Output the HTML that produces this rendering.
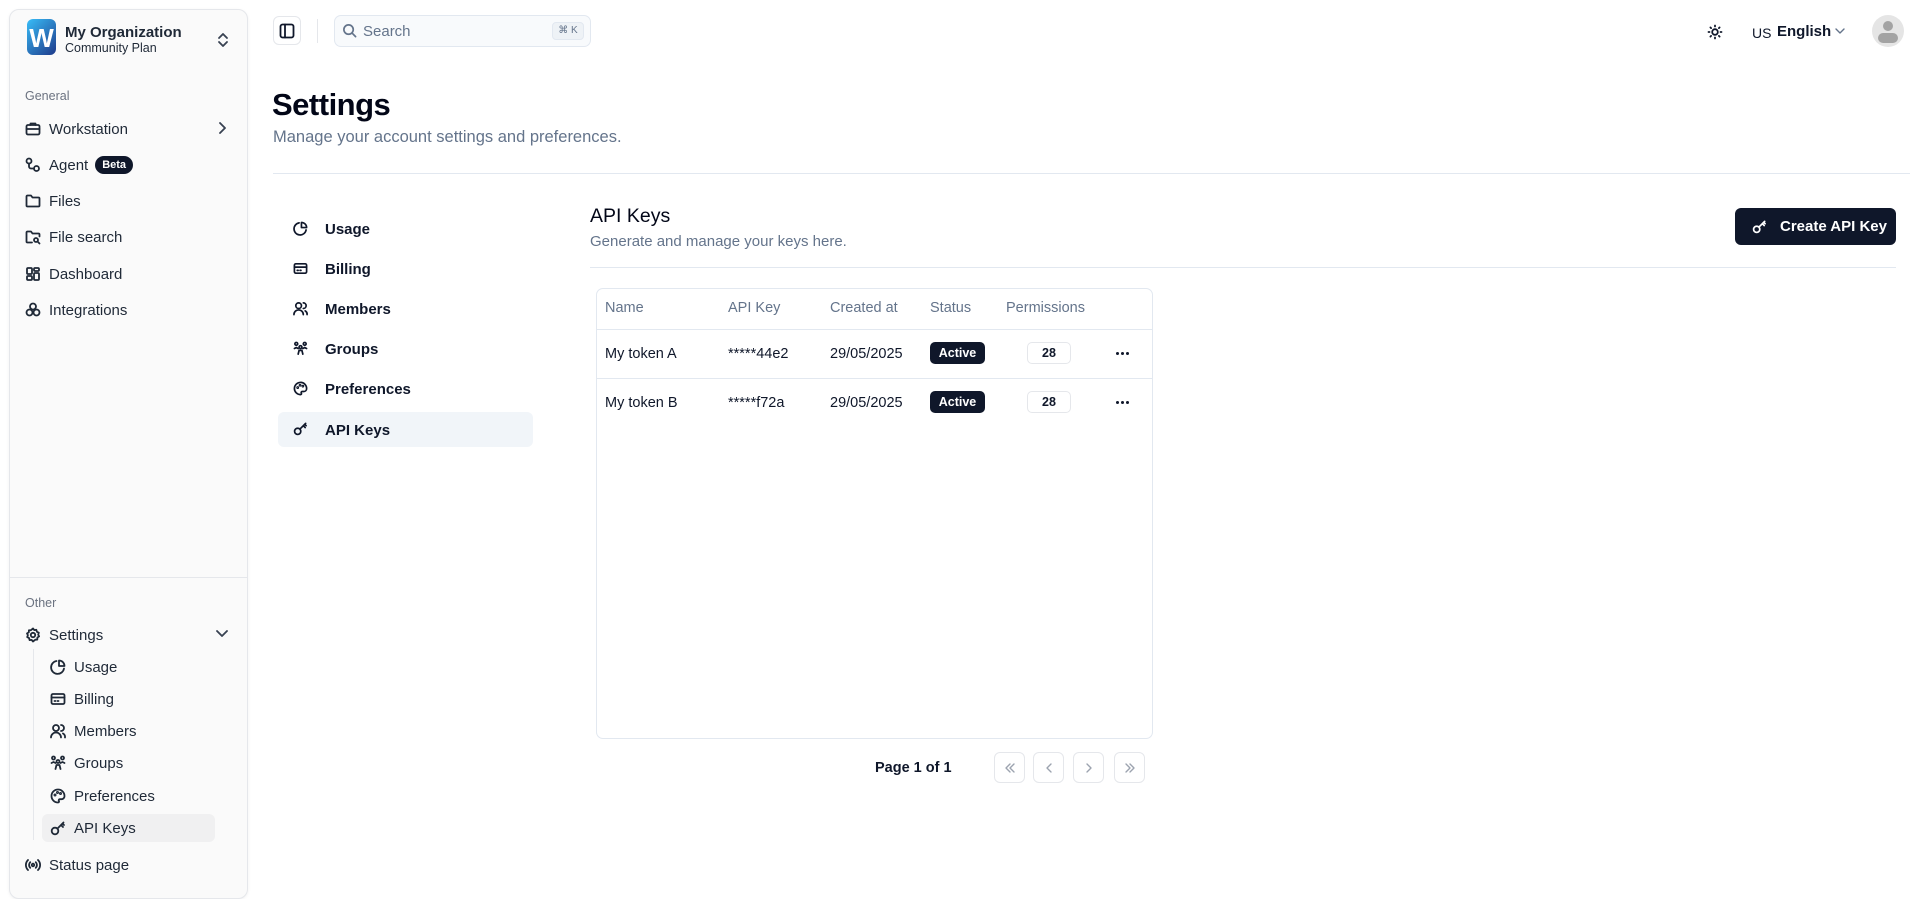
<!DOCTYPE html>
<html><head><meta charset="utf-8"><style>
*{box-sizing:border-box;margin:0;padding:0}
body{width:1919px;height:883px;overflow:hidden;background:#fff;font-family:"Liberation Sans",sans-serif;color:#0f172a;position:relative}
.a{position:absolute}
.sb{left:9px;top:9px;width:239px;height:890px;background:#fafafa;border:1px solid #e5e7eb;border-radius:10px;box-shadow:0 1px 3px rgba(0,0,0,.06)}
.it{position:absolute;font-size:15px;color:#1f2937;display:flex;align-items:center;height:20px}
.it svg{position:absolute}
.lbl{font-size:12.5px;color:#6b7280}
svg{fill:none;stroke:currentColor;stroke-width:1.8;stroke-linecap:round;stroke-linejoin:round}
.nv{position:absolute;left:293px;font-size:15px;font-weight:bold;color:#0f172a;height:20px;display:flex;align-items:center}
.th{position:absolute;top:300px;font-size:14.5px;color:#64748b}
.td{position:absolute;font-size:14.5px;color:#0f172a}
.badge{position:absolute;width:55px;height:22px;background:#0f172a;color:#fff;font-size:12.5px;font-weight:bold;border-radius:5px;text-align:center;line-height:22px}
.pb{position:absolute;width:44px;height:22px;border:1px solid #e5e7eb;border-radius:5px;font-size:12.5px;font-weight:bold;text-align:center;line-height:20px}
.pg{position:absolute;top:752px;width:31px;height:31px;border:1px solid #e5e7eb;border-radius:6px;color:#9ca3af;display:flex;align-items:center;justify-content:center}
.dots{position:absolute;width:16px;height:4px}
.dots i{position:absolute;top:0;width:3px;height:3px;border-radius:50%;background:#0f172a}
</style></head><body>

<div class="a sb"></div>
<div class="a" style="left:27px;top:19px;width:29px;height:36px;border-radius:6px;background:linear-gradient(135deg,#38bdf8,#1e3a8a);color:#fff;font-weight:bold;font-size:26px;text-align:center;line-height:38px">W</div>
<div class="a" style="left:65px;top:24px;font-size:15px;font-weight:bold;color:#1f2937">My Organization</div>
<div class="a" style="left:65px;top:41px;font-size:12.5px;color:#1f2937">Community Plan</div>
<svg class="a" style="left:216px;top:31px;color:#374151" width="14" height="18" viewBox="0 0 14 18"><path d="M3 7l4-4 4 4M3 11l4 4 4-4"/></svg>

<div class="a lbl" style="left:25px;top:89px">General</div>
<div class="it" style="left:25px;top:119px"><svg width="16" height="16" viewBox="0 0 16 16" style="left:0"><rect x="1.5" y="4" width="13" height="9.5" rx="1.5"/><path d="M5.5 4V2.5h5V4M1.5 8h13"/></svg><span style="margin-left:24px">Workstation</span></div>
<svg class="a" style="left:216px;top:121px;color:#374151" width="12" height="14" viewBox="0 0 12 14"><path d="M4 2l5 5-5 5"/></svg>
<div class="it" style="left:25px;top:155px"><svg width="16" height="16" viewBox="0 0 16 16" style="left:0"><circle cx="4" cy="4" r="2.5"/><circle cx="11.5" cy="11.5" r="2.5"/><path d="M4 6.5v3a2 2 0 0 0 2 2h3"/></svg><span style="margin-left:24px">Agent</span><span style="margin-left:7px;background:#0f172a;color:#fff;font-size:11px;font-weight:bold;border-radius:10px;padding:3px 7px">Beta</span></div>
<div class="it" style="left:25px;top:191px"><svg width="16" height="16" viewBox="0 0 16 16" style="left:0"><path d="M1.5 3.5a1 1 0 0 1 1-1h3.5l1.5 2h6a1 1 0 0 1 1 1v7a1 1 0 0 1-1 1h-11a1 1 0 0 1-1-1z"/></svg><span style="margin-left:24px">Files</span></div>
<div class="it" style="left:25px;top:227px"><svg width="16" height="16" viewBox="0 0 16 16" style="left:0"><path d="M7 13.5H2.5a1 1 0 0 1-1-1v-9a1 1 0 0 1 1-1h3.5l1.5 2h6a1 1 0 0 1 1 1v2"/><circle cx="11" cy="11" r="2"/><path d="M12.5 12.5l2 2"/></svg><span style="margin-left:24px">File search</span></div>
<div class="it" style="left:25px;top:264px"><svg width="16" height="16" viewBox="0 0 16 16" style="left:0"><rect x="2" y="2" width="5" height="6" rx="1"/><rect x="9" y="2" width="5" height="3" rx="1"/><rect x="9" y="7" width="5" height="7" rx="1"/><rect x="2" y="10" width="5" height="4" rx="1"/></svg><span style="margin-left:24px">Dashboard</span></div>
<div class="it" style="left:25px;top:300px"><svg width="16" height="16" viewBox="0 0 16 16" style="left:0"><circle cx="8" cy="4.5" r="3"/><circle cx="4.5" cy="10.5" r="3"/><circle cx="11.5" cy="10.5" r="3"/></svg><span style="margin-left:24px">Integrations</span></div>

<div class="a" style="left:9px;top:577px;width:239px;border-top:1px solid #e5e7eb"></div>
<div class="a lbl" style="left:25px;top:596px">Other</div>
<div class="it" style="left:25px;top:625px"><svg width="16" height="16" viewBox="0 0 16 16" style="left:0"><circle cx="8" cy="8" r="2.2"/><path d="M8 1.5l1.3 1.6 2-.3.6 2 1.9.9-.6 1.9.9 1.8-1.7 1.1-.1 2.1-2 .1L8 14.5l-1.4-1.6-2 .2-.5-2-1.9-1 .7-1.9-.9-1.8 1.8-1 .1-2.1 2-.1z"/></svg><span style="margin-left:24px">Settings</span></div>
<svg class="a" style="left:215px;top:628px;color:#374151" width="14" height="12" viewBox="0 0 14 12"><path d="M2 3l5 5 5-5"/></svg>
<div class="a" style="left:33px;top:649px;height:191px;border-left:1px solid #e5e7eb"></div>
<div class="a" style="left:42px;top:814px;width:173px;height:28px;background:#f0f0f1;border-radius:6px"></div>
<div class="it" style="left:50px;top:657px"><svg width="16" height="16" viewBox="0 0 16 16" style="left:0"><path d="M14 9.5A6.5 6.5 0 1 1 6.5 2"/><path d="M9 1.5a5.5 5.5 0 0 1 5.5 5.5H9z"/></svg><span style="margin-left:24px">Usage</span></div>
<div class="it" style="left:50px;top:689px"><svg width="16" height="16" viewBox="0 0 16 16" style="left:0"><rect x="1.5" y="3" width="13" height="10" rx="1.5"/><path d="M1.5 6.5h13M4.5 10h1M7.5 10h1"/></svg><span style="margin-left:24px">Billing</span></div>
<div class="it" style="left:50px;top:721px"><svg width="16" height="16" viewBox="0 0 16 16" style="left:0"><circle cx="6" cy="5" r="3"/><path d="M1 14.5a5 5 0 0 1 10 0M11 2a3 3 0 0 1 0 6M13 10.5a4 4 0 0 1 2 4"/></svg><span style="margin-left:24px">Members</span></div>
<div class="it" style="left:50px;top:753px"><svg width="16" height="16" viewBox="0 0 16 16" style="left:0"><circle cx="3.5" cy="3" r="1.5"/><circle cx="12.5" cy="3" r="1.5"/><circle cx="8" cy="6.5" r="1.5"/><path d="M1.5 8l2 -1 2 1M10.5 8l2-1 2 1M5.5 14l1-4h3l1 4"/></svg><span style="margin-left:24px">Groups</span></div>
<div class="it" style="left:50px;top:786px"><svg width="16" height="16" viewBox="0 0 16 16" style="left:0"><path d="M8 1.5a6.5 6.5 0 0 0 0 13c1 0 1.3-.8.9-1.5-.5-.9 0-1.8 1-1.8h1.6a3 3 0 0 0 3-3A6.5 6.5 0 0 0 8 1.5z"/><circle cx="5" cy="7" r=".6"/><circle cx="7.5" cy="4.5" r=".6"/><circle cx="10.5" cy="5.5" r=".6"/></svg><span style="margin-left:24px">Preferences</span></div>
<div class="it" style="left:50px;top:818px"><svg width="16" height="16" viewBox="0 0 16 16" style="left:0"><circle cx="5" cy="11" r="3.3"/><path d="M7.4 8.6L13.5 2.5M11 5l2 2M12.5 3.5l1.5 1.5"/></svg><span style="margin-left:24px">API Keys</span></div>
<div class="it" style="left:25px;top:855px"><svg width="16" height="16" viewBox="0 0 16 16" style="left:0"><circle cx="8" cy="8" r="1.3"/><path d="M5.2 5.2a4 4 0 0 0 0 5.6M10.8 5.2a4 4 0 0 1 0 5.6M3 3a7 7 0 0 0 0 10M13 3a7 7 0 0 1 0 10"/></svg><span style="margin-left:24px">Status page</span></div>

<div class="a" style="left:273px;top:16px;width:28px;height:29px;border:1px solid #e5e7eb;border-radius:6px;display:flex;align-items:center;justify-content:center"><svg width="16" height="16" viewBox="0 0 16 16"><rect x="1.5" y="1.5" width="13" height="13" rx="2"/><path d="M6 1.5v13"/></svg></div>
<div class="a" style="left:317px;top:19px;height:24px;border-left:1px solid #e5e7eb"></div>
<div class="a" style="left:334px;top:15px;width:257px;height:32px;border:1px solid #e2e8f0;border-radius:7px;background:#f8fafc"></div>
<svg class="a" style="left:342px;top:23px;color:#64748b" width="15" height="15" viewBox="0 0 16 16"><circle cx="7" cy="7" r="5"/><path d="M11 11l3.5 3.5"/></svg>
<div class="a" style="left:363px;top:23px;font-size:15px;color:#64748b">Search</div>
<div class="a" style="left:552px;top:22px;width:32px;height:18px;border:1px solid #e2e8f0;border-radius:4px;background:#eef2f6;font-size:10px;color:#64748b;text-align:center;line-height:16px">⌘ K</div>

<svg class="a" style="left:1707px;top:24px" width="16" height="16" viewBox="0 0 16 16"><circle cx="8" cy="8" r="2.8"/><path d="M8 1.5v1M8 13.5v1M1.5 8h1M13.5 8h1M3.4 3.4l.7.7M11.9 11.9l.7.7M3.4 12.6l.7-.7M11.9 4.1l.7-.7"/></svg>
<div class="a" style="left:1752px;top:25px;font-size:14px;color:#0f172a">US</div>
<div class="a" style="left:1777px;top:23px;font-size:15px;font-weight:bold;color:#0f172a">English</div>
<svg class="a" style="left:1834px;top:26px;color:#64748b" width="12" height="10" viewBox="0 0 12 10"><path d="M2 3l4 4 4-4" stroke-width="1.4"/></svg>
<div class="a" style="left:1872px;top:15px;width:32px;height:32px;border-radius:50%;background:#e5e5e5;overflow:hidden"><div class="a" style="left:11px;top:6px;width:10px;height:10px;border-radius:50%;background:#a3a3a3"></div><div class="a" style="left:6px;top:18px;width:20px;height:10px;border-radius:10px;background:#a3a3a3"></div></div>

<div class="a" style="left:272px;top:87px;font-size:31px;font-weight:bold;color:#020617;letter-spacing:-.5px">Settings</div>
<div class="a" style="left:273px;top:128px;font-size:16.5px;color:#64748b">Manage your account settings and preferences.</div>
<div class="a" style="left:273px;top:173px;width:1637px;border-top:1px solid #e2e8f0"></div>

<div class="a" style="left:278px;top:412px;width:255px;height:35px;background:#f1f5f9;border-radius:6px"></div>
<svg class="a" style="left:293px;top:221px" width="15" height="15" viewBox="0 0 16 16"><path d="M14 9.5A6.5 6.5 0 1 1 6.5 2"/><path d="M9 1.5a5.5 5.5 0 0 1 5.5 5.5H9z"/></svg><div class="nv" style="left:325px;top:219px">Usage</div>
<svg class="a" style="left:293px;top:261px" width="15" height="15" viewBox="0 0 16 16"><rect x="1.5" y="3" width="13" height="10" rx="1.5"/><path d="M1.5 6.5h13M4.5 10h1M7.5 10h1"/></svg><div class="nv" style="left:325px;top:259px">Billing</div>
<svg class="a" style="left:293px;top:301px" width="15" height="15" viewBox="0 0 16 16"><circle cx="6" cy="5" r="3"/><path d="M1 14.5a5 5 0 0 1 10 0M11 2a3 3 0 0 1 0 6M13 10.5a4 4 0 0 1 2 4"/></svg><div class="nv" style="left:325px;top:299px">Members</div>
<svg class="a" style="left:293px;top:341px" width="15" height="15" viewBox="0 0 16 16"><circle cx="3.5" cy="3" r="1.5"/><circle cx="12.5" cy="3" r="1.5"/><circle cx="8" cy="6.5" r="1.5"/><path d="M1.5 8l2 -1 2 1M10.5 8l2-1 2 1M5.5 14l1-4h3l1 4"/></svg><div class="nv" style="left:325px;top:339px">Groups</div>
<svg class="a" style="left:293px;top:381px" width="15" height="15" viewBox="0 0 16 16"><path d="M8 1.5a6.5 6.5 0 0 0 0 13c1 0 1.3-.8.9-1.5-.5-.9 0-1.8 1-1.8h1.6a3 3 0 0 0 3-3A6.5 6.5 0 0 0 8 1.5z"/><circle cx="5" cy="7" r=".6"/><circle cx="7.5" cy="4.5" r=".6"/><circle cx="10.5" cy="5.5" r=".6"/></svg><div class="nv" style="left:325px;top:379px">Preferences</div>
<svg class="a" style="left:293px;top:421px" width="15" height="15" viewBox="0 0 16 16"><circle cx="5" cy="11" r="3.3"/><path d="M7.4 8.6L13.5 2.5M11 5l2 2M12.5 3.5l1.5 1.5"/></svg><div class="nv" style="left:325px;top:420px">API Keys</div>

<div class="a" style="left:590px;top:205px;font-size:19.5px;color:#020617">API Keys</div>
<div class="a" style="left:590px;top:233px;font-size:15px;color:#64748b">Generate and manage your keys here.</div>
<div class="a" style="left:1735px;top:208px;width:161px;height:37px;background:#0f172a;border-radius:6px;color:#fff;font-size:15px;font-weight:bold;display:flex;align-items:center"><svg style="margin-left:17px;margin-right:13px" width="15" height="15" viewBox="0 0 16 16"><circle cx="5" cy="11" r="3.3"/><path d="M7.4 8.6L13.5 2.5M11 5l2 2M12.5 3.5l1.5 1.5"/></svg>Create API Key</div>
<div class="a" style="left:590px;top:267px;width:1306px;border-top:1px solid #e2e8f0"></div>

<div class="a" style="left:596px;top:288px;width:557px;height:451px;border:1px solid #e2e8f0;border-radius:7px"></div>
<div class="a" style="left:597px;top:329px;width:555px;border-top:1px solid #e2e8f0"></div>
<div class="a" style="left:597px;top:378px;width:555px;border-top:1px solid #e2e8f0"></div>
<div class="th" style="left:605px">Name</div>
<div class="th" style="left:728px">API Key</div>
<div class="th" style="left:830px">Created at</div>
<div class="th" style="left:930px">Status</div>
<div class="th" style="left:1006px">Permissions</div>

<div class="td" style="left:605px;top:346px">My token A</div>
<div class="td" style="left:728px;top:346px">*****44e2</div>
<div class="td" style="left:830px;top:346px">29/05/2025</div>
<div class="badge" style="left:930px;top:342px">Active</div>
<div class="pb" style="left:1027px;top:342px">28</div>
<div class="dots" style="left:1116px;top:352px"><i style="left:0"></i><i style="left:5px"></i><i style="left:10px"></i></div>

<div class="td" style="left:605px;top:395px">My token B</div>
<div class="td" style="left:728px;top:395px">*****f72a</div>
<div class="td" style="left:830px;top:395px">29/05/2025</div>
<div class="badge" style="left:930px;top:391px">Active</div>
<div class="pb" style="left:1027px;top:391px">28</div>
<div class="dots" style="left:1116px;top:401px"><i style="left:0"></i><i style="left:5px"></i><i style="left:10px"></i></div>

<div class="a" style="left:875px;top:760px;font-size:14.5px;font-weight:bold;color:#0f172a">Page 1 of 1</div>
<div class="pg" style="left:994px"><svg width="14" height="14" viewBox="0 0 14 14"><path d="M7 3L3 7l4 4M11 3L7 7l4 4" stroke-width="1.4"/></svg></div>
<div class="pg" style="left:1033px"><svg width="14" height="14" viewBox="0 0 14 14"><path d="M9 3L5 7l4 4" stroke-width="1.4"/></svg></div>
<div class="pg" style="left:1073px"><svg width="14" height="14" viewBox="0 0 14 14"><path d="M5 3l4 4-4 4" stroke-width="1.4"/></svg></div>
<div class="pg" style="left:1114px"><svg width="14" height="14" viewBox="0 0 14 14"><path d="M3 3l4 4-4 4M7 3l4 4-4 4" stroke-width="1.4"/></svg></div>
</body></html>
